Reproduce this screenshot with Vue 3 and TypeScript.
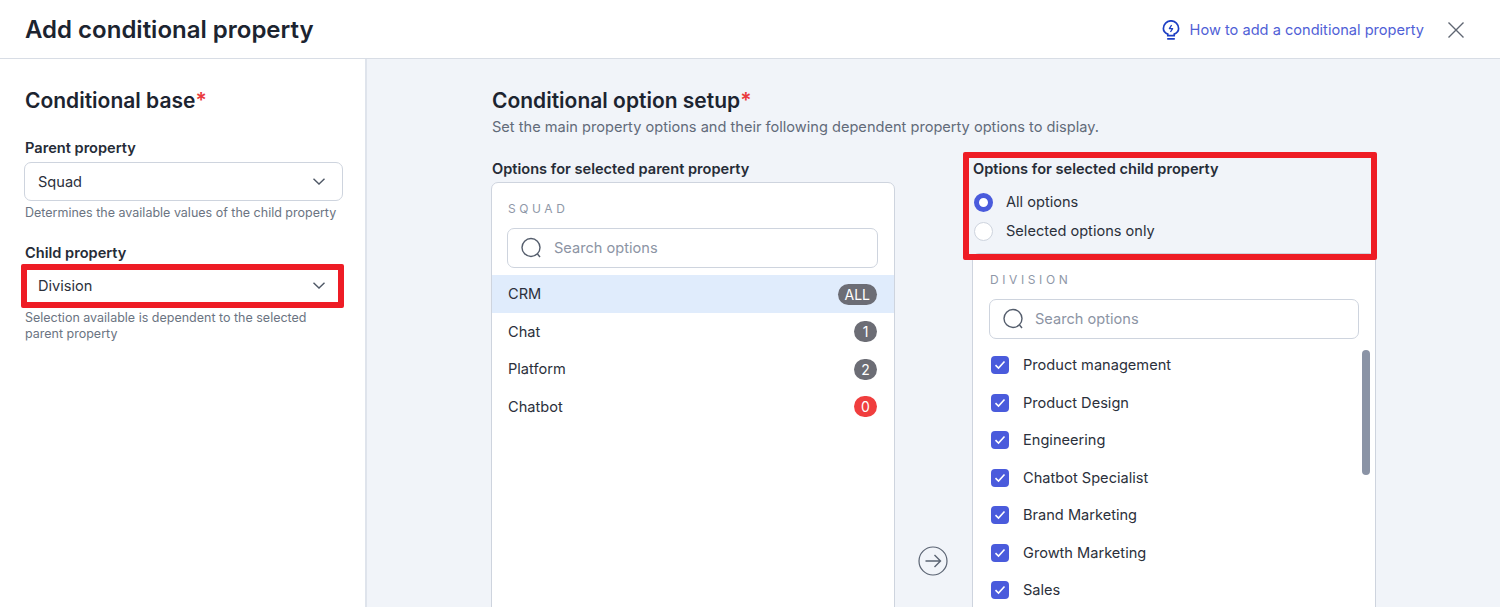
<template>
  <div class="page">
    <header class="topbar">
      <h1>Add conditional property</h1>
      <div class="top-actions">
        <a class="help">
          <svg width="18" height="20" viewBox="0 0 18 20" fill="none" stroke="#1d3fc4" stroke-width="1.7">
            <path d="M5.800 15.600v-1.500C3.200 13 1.400 11 1.400 8.400a7.600 7.600 0 0 1 15.200 0c0 2.600-1.800 4.600-4.400 5.700v1.500z" />
            <path d="M5.800 18.800h6.400" stroke-linecap="round" />
            <path d="M9.600 5 7.400 8.700h3.200l-2.100 3.300" stroke-width="1.300" stroke-linejoin="round" />
          </svg>
          <span>How to add a conditional property</span>
        </a>
        <svg class="close" width="16" height="16" viewBox="0 0 16 16" stroke="#5f6672" stroke-width="1.4">
          <path d="M.5.500l15 15M15.500.500l-15 15" />
        </svg>
      </div>
    </header>

    <div class="body">
      <aside class="side">
        <h2>Conditional base<em>*</em></h2>

        <label class="field-label">Parent property</label>
        <div class="select-wrap">
          <div class="select">
            <span>Squad</span>
            <svg width="12" height="7" viewBox="0 0 12 7" fill="none" stroke="#4f5866" stroke-width="1.4"><path d="M.5.700 6 6l5.500-5.300" /></svg>
          </div>
        </div>
        <p class="hint">Determines the available values of the child property</p>

        <label class="field-label second">Child property</label>
        <div class="select-wrap child-select">
          <div class="select">
            <span>Division</span>
            <svg width="12" height="7" viewBox="0 0 12 7" fill="none" stroke="#4f5866" stroke-width="1.4"><path d="M.5.700 6 6l5.500-5.300" /></svg>
          </div>
          <div class="red-box child-mark"></div>
        </div>
        <p class="hint wide-gap">Selection available is dependent to the selected parent property</p>
      </aside>

      <main class="main">
        <h2>Conditional option setup<em>*</em></h2>
        <p class="sub">Set the main property options and their following dependent property options to display.</p>

        <div class="columns">
          <section class="col">
            <div class="col-label">Options for selected parent property</div>
            <div class="card">
              <div class="caption">SQUAD</div>
              <div class="search">
                <svg width="22" height="22" viewBox="0 0 22 22" fill="none" stroke="#545d6c" stroke-width="1.4"><circle cx="10" cy="10.500" r="9" /><path d="m16.500 17 2.500 3" /></svg>
                <span>Search options</span>
              </div>
              <ul class="list">
                <li v-for="item in parents" :key="item.name" class="parent-row" :class="{ active: item.active }">
                  <span>{{ item.name }}</span>
                  <b class="badge" :class="{ zero: item.count === '0' }">{{ item.count }}</b>
                </li>
              </ul>
            </div>
          </section>

          <div class="arrow-col">
            <svg width="30" height="30" viewBox="0 0 30 30" fill="none" stroke="#5a6372" stroke-width="1.2">
              <circle cx="15" cy="15" r="14" />
              <path d="M7.500 15h15M16.500 9l6 6-6 6" stroke-width="1.400" />
            </svg>
          </div>

          <section class="col">
            <div class="child-head">
              <div class="col-label">Options for selected child property</div>
              <div class="radios">
                <div class="radio-row"><i class="radio on"></i><span>All options</span></div>
                <div class="radio-row"><i class="radio"></i><span>Selected options only</span></div>
              </div>
              <div class="red-box head-mark"></div>
            </div>
            <div class="card child-card">
              <div class="caption">DIVISION</div>
              <div class="search">
                <svg width="22" height="22" viewBox="0 0 22 22" fill="none" stroke="#545d6c" stroke-width="1.4"><circle cx="10" cy="10.500" r="9" /><path d="m16.500 17 2.500 3" /></svg>
                <span>Search options</span>
              </div>
              <ul class="list">
                <li v-for="name in divisions" :key="name" class="child-row">
                  <i class="check">
                    <svg width="12" height="10" viewBox="0 0 12 10" fill="none" stroke="#fff" stroke-width="1.600"><path d="M1.500 5.200 4.500 8l6-6.500" /></svg>
                  </i>
                  <span>{{ name }}</span>
                </li>
              </ul>
              <div class="scrollbar"></div>
            </div>
          </section>
        </div>
      </main>
    </div>
  </div>
</template>

<script setup lang="ts">
interface ParentOption {
  name: string;
  count: string;
  active?: boolean;
}

const parents: ParentOption[] = [
  { name: "CRM", count: "ALL", active: true },
  { name: "Chat", count: "1" },
  { name: "Platform", count: "2" },
  { name: "Chatbot", count: "0" },
];

const divisions: string[] = [
  "Product management",
  "Product Design",
  "Engineering",
  "Chatbot Specialist",
  "Brand Marketing",
  "Growth Marketing",
  "Sales",
];
</script>

<style>
html,
body {
  margin: 0;
  overflow: hidden;
}
</style>

<style scoped>
.page {
  width: 1500px;
  height: 607px;
  overflow: hidden;
  display: flex;
  flex-direction: column;
  font-family: Inter, "Liberation Sans", sans-serif;
  font-size: 14.6px;
  color: #2b303b;
  background: #fff;
}

.topbar {
  box-sizing: border-box;
  height: 59px;
  flex: none;
  display: flex;
  align-items: center;
  justify-content: space-between;
  padding: 1px 36px 0 25px;
  border-bottom: 1px solid #d8dde5;
}

.topbar h1 {
  margin: 0;
  font-size: 24px;
  font-weight: 600;
  color: #1c2430;
}

.top-actions {
  display: flex;
  align-items: center;
}

.help {
  display: flex;
  align-items: center;
  gap: 10px;
  color: #4f60d6;
}

.close {
  margin-left: 24px;
}

.body {
  flex: 1;
  display: flex;
  min-height: 0;
}

.side {
  box-sizing: border-box;
  width: 367px;
  flex: none;
  padding: 28px 23px 0 25px;
  border-right: 2px solid #dfe4ec;
}

h2 {
  margin: 0;
  font-size: 21px;
  line-height: 28px;
  font-weight: 600;
  color: #1c2430;
}

h2 em {
  font-style: normal;
  color: #ea3a3d;
}

.field-label {
  display: block;
  margin-top: 24px;
  line-height: 18px;
  font-weight: 600;
  color: #262c37;
}

.field-label.second {
  margin-top: 23px;
}

.select-wrap {
  position: relative;
  margin: 5px -1px 0;
}

.select-wrap.child-select {
  margin-top: 4px;
}

.select {
  box-sizing: border-box;
  height: 39px;
  display: flex;
  align-items: center;
  justify-content: space-between;
  padding: 0 17px 0 13px;
  background: #fff;
  border: 1px solid #ced4de;
  border-radius: 7px;
}

.hint {
  margin: 4px 0 0;
  font-size: 12.500px;
  line-height: 16px;
  color: #6b7482;
}

.hint.wide-gap {
  margin-top: 5px;
}

.red-box {
  position: absolute;
  box-sizing: border-box;
  border: 6px solid #ee1c25;
  border-radius: 2px;
  pointer-events: none;
  z-index: 2;
}

.child-mark {
  left: -3px;
  right: -1px;
  top: -2px;
  bottom: -3px;
}

.main {
  flex: 1;
  min-width: 0;
  box-sizing: border-box;
  padding: 28px 0 0 125px;
  background: #f1f4f9;
}

.sub {
  margin: 2px 0 0;
  line-height: 20px;
  color: #626b79;
}

.columns {
  display: flex;
  margin-top: 23px;
}

.col {
  width: 404px;
  flex: none;
}

.col-label {
  line-height: 18px;
  font-weight: 600;
  color: #262c37;
}

.card {
  box-sizing: border-box;
  width: 404px;
  height: 440px;
  margin: 4px 0 0 -1px;
  position: relative;
  background: #fff;
  border: 1px solid #ced4de;
  border-radius: 7px 7px 0 0;
}

.caption {
  padding: 17.500px 0 0 16px;
  font-size: 12px;
  line-height: 15px;
  letter-spacing: 3.6px;
  color: #8f98a8;
}

.search {
  box-sizing: border-box;
  height: 40px;
  margin: 12.500px 16px 0 15px;
  display: flex;
  align-items: center;
  gap: 11px;
  padding-left: 13px;
  border: 1px solid #ced4de;
  border-radius: 7px;
  color: #8c94a4;
}

.child-card .caption {
  padding-left: 17px;
}

.child-card .search {
  margin-left: 16px;
  gap: 10px;
}

.list {
  list-style: none;
  margin: 7.300px 0 0;
  padding: 0;
}

.parent-row {
  height: 37.500px;
  display: flex;
  align-items: center;
  justify-content: space-between;
  padding: 0 17px 0 16px;
}

.parent-row.active {
  background: #e0ecfc;
}

.badge {
  min-width: 23px;
  height: 21px;
  box-sizing: border-box;
  padding: 0 7px;
  border-radius: 11px;
  display: flex;
  align-items: center;
  justify-content: center;
  background: #6c6d75;
  color: #fff;
  font-size: 14px;
  font-weight: 400;
}

.badge.zero {
  background: #f03e3e;
}

.arrow-col {
  width: 77px;
  height: 445px;
  flex: none;
  box-sizing: border-box;
  display: flex;
  justify-content: center;
  align-items: flex-start;
  padding: 385.500px 3px 0 0;
}

.child-head {
  position: relative;
  height: 93px;
}

.radios {
  margin-top: 9.500px;
}

.radio-row {
  display: flex;
  align-items: center;
  gap: 13px;
  height: 29px;
  padding-left: 1px;
}

.radio {
  box-sizing: border-box;
  width: 19px;
  height: 19px;
  border-radius: 50%;
  border: 1px solid #ced4de;
  background: #fff;
}

.radio.on {
  border: 5px solid #4a5bdc;
}

.head-mark {
  left: -10px;
  right: 0;
  top: -8px;
  bottom: -7px;
}

.child-card {
  margin-top: 0;
}

.child-row {
  height: 37.500px;
  display: flex;
  align-items: center;
  gap: 14px;
  padding-left: 18px;
}

.check {
  width: 18px;
  height: 18px;
  border-radius: 4px;
  background: #4a5bdc;
  display: flex;
  align-items: center;
  justify-content: center;
}

.scrollbar {
  position: absolute;
  right: 5px;
  top: 96px;
  width: 8px;
  height: 125px;
  border-radius: 4px;
  background: #8a93a5;
}
</style>
